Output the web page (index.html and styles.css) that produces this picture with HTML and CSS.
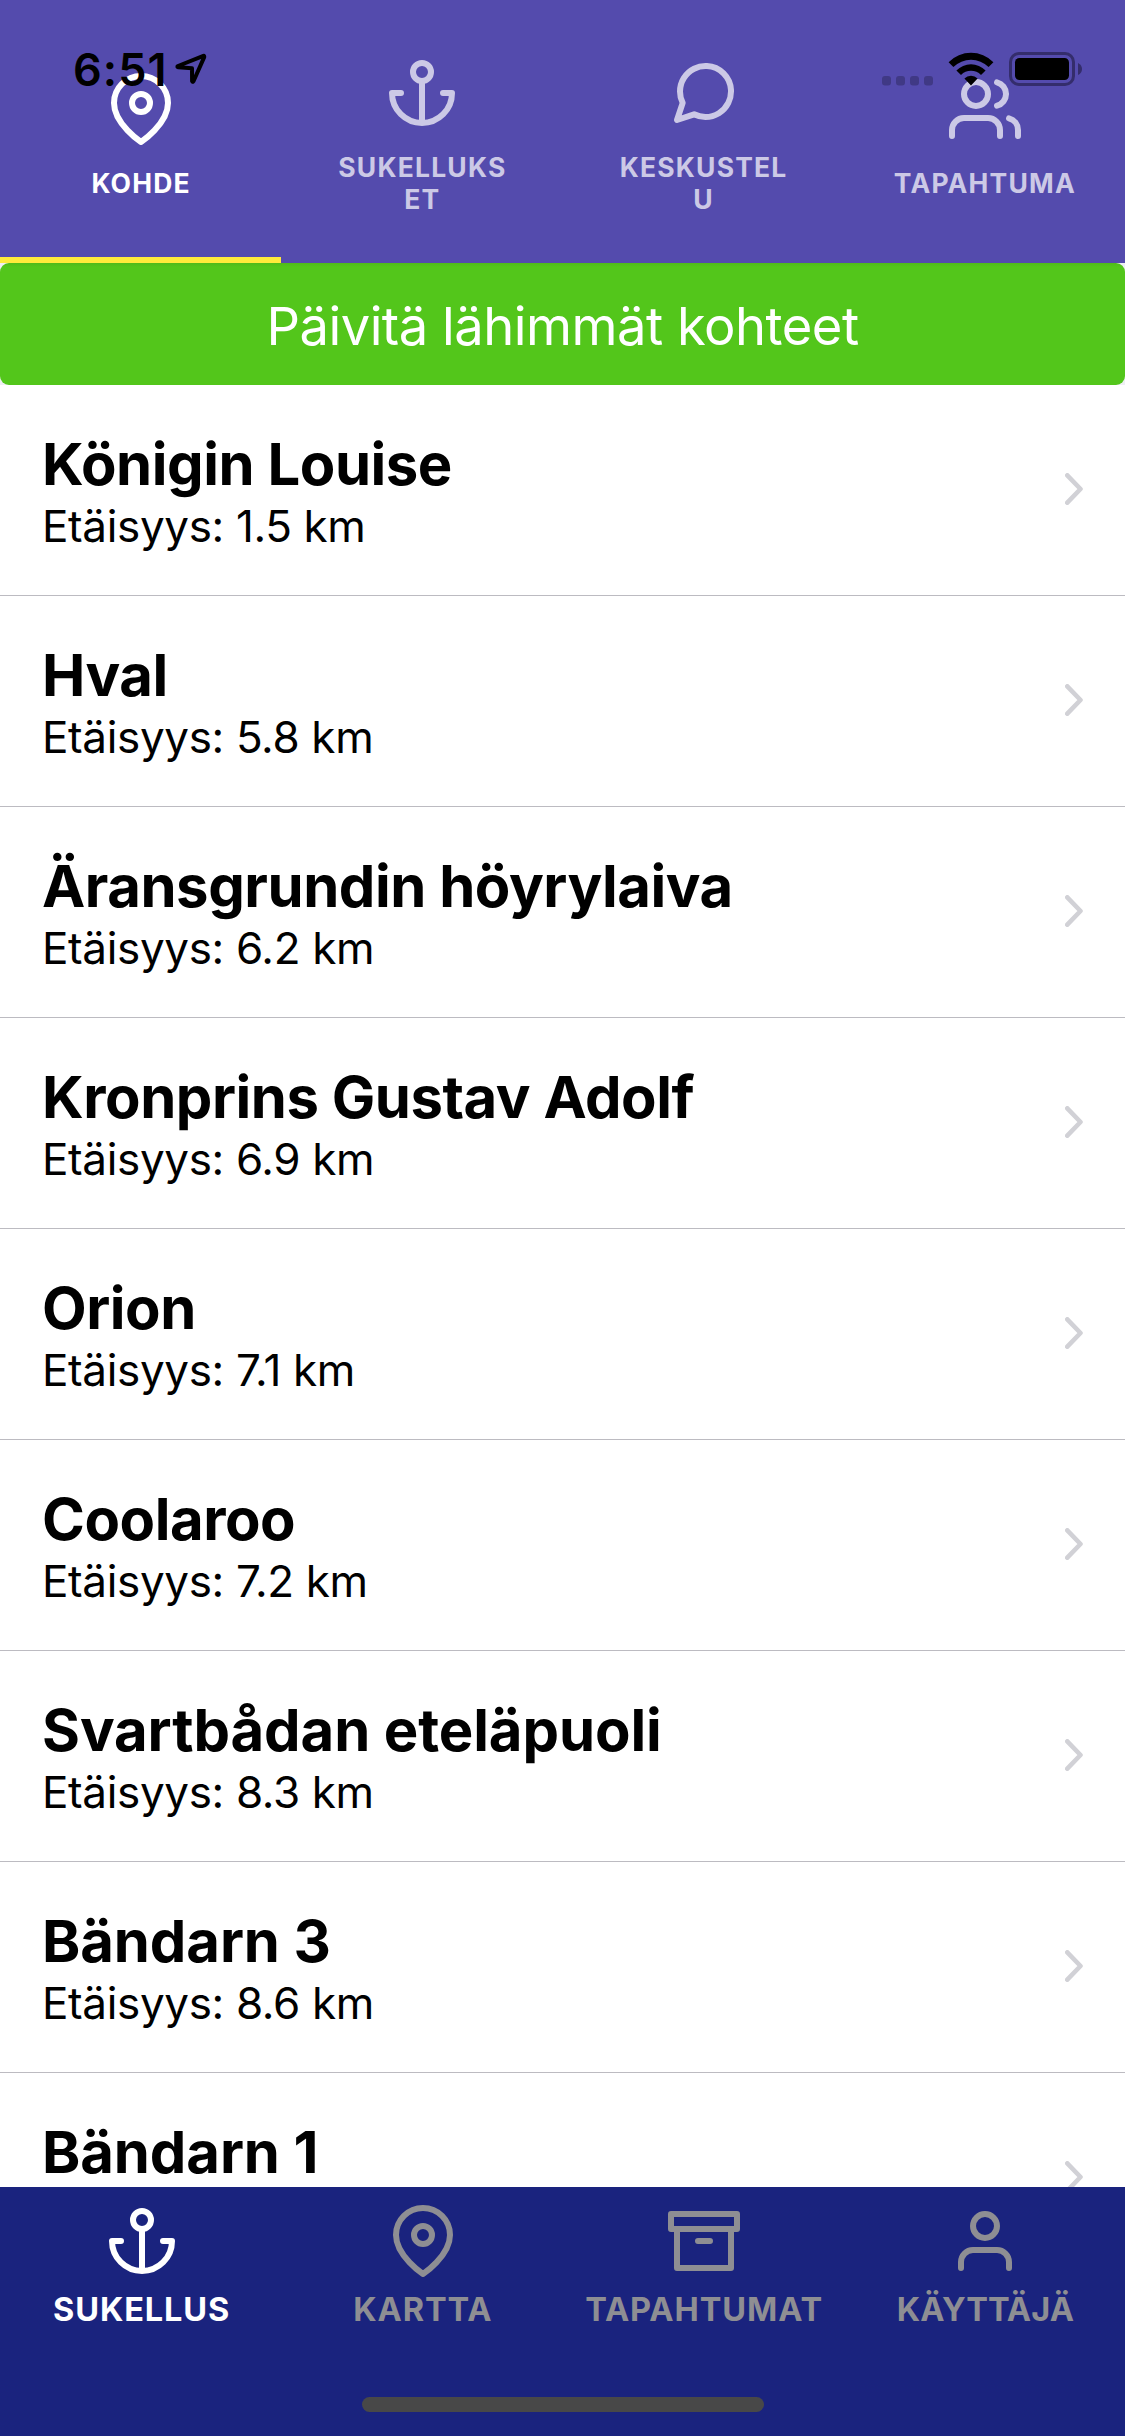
FILE: index.html
```html
<!DOCTYPE html>
<html lang="fi">
<head>
<meta charset="utf-8">
<title>Sukelluskohteet</title>
<link rel="stylesheet" href="styles.css">
</head>
<body>
<svg class="defs" aria-hidden="true">
  <symbol id="pin" viewBox="0 0 24 24"><path d="M21 10c0 7-9 13-9 13s-9-6-9-13a9 9 0 0 1 18 0z"/><circle cx="12" cy="10" r="3"/></symbol>
  <symbol id="anchor" viewBox="0 0 24 24"><circle cx="12" cy="5" r="3"/><path d="M12 22V8M5 12H2a10 10 0 0 0 20 0h-3"/></symbol>
  <symbol id="message" viewBox="0 0 24 24"><path d="M21 11.5a8.38 8.38 0 0 1-.9 3.8 8.5 8.5 0 0 1-7.6 4.7 8.38 8.38 0 0 1-3.8-.9L3 21l1.9-5.7a8.38 8.38 0 0 1-.9-3.8 8.5 8.5 0 0 1 4.7-7.6 8.38 8.38 0 0 1 3.8-.9h.5a8.48 8.48 0 0 1 8 8v.5z"/></symbol>
  <symbol id="users" viewBox="0 0 24 24"><path d="M17 21v-2a4 4 0 0 0-4-4H5a4 4 0 0 0-4 4v2"/><circle cx="9" cy="7" r="4"/><path d="M23 21v-2a4 4 0 0 0-3-3.87M16 3.13a4 4 0 0 1 0 7.75"/></symbol>
  <symbol id="archive" viewBox="0 0 24 24"><path d="M21 8v13H3V8M1 3h22v5H1zM10 12h4"/></symbol>
  <symbol id="user" viewBox="0 0 24 24"><path d="M20 21v-2a4 4 0 0 0-4-4H8a4 4 0 0 0-4 4v2"/><circle cx="12" cy="7" r="4"/></symbol>
  <symbol id="chevron" viewBox="0 0 18 32"><path d="M2.3 2.3 15.5 16 2.3 29.7"/></symbol>
</svg>
<div class="screen">
  <header class="tabs">
    <div class="tab tab-active"><svg class="icon"><use href="#pin"/></svg><span>KOHDE</span></div>
    <div class="tab"><svg class="icon"><use href="#anchor"/></svg><span>SUKELLUKS<br>ET</span></div>
    <div class="tab"><svg class="icon"><use href="#message"/></svg><span>KESKUSTEL<br>U</span></div>
    <div class="tab"><svg class="icon"><use href="#users"/></svg><span>TAPAHTUMA</span></div>
  </header>

  <main class="content">
    <div class="refresh-wrap"><button class="refresh">Päivitä lähimmät kohteet</button></div>
    <ul class="list">
      <li class="row"><div><h2>Königin Louise</h2><p>Etäisyys: 1.5 km</p></div><svg class="chevron"><use href="#chevron"/></svg></li>
      <li class="row"><div><h2>Hval</h2><p>Etäisyys: 5.8 km</p></div><svg class="chevron"><use href="#chevron"/></svg></li>
      <li class="row"><div><h2>Äransgrundin höyrylaiva</h2><p>Etäisyys: 6.2 km</p></div><svg class="chevron"><use href="#chevron"/></svg></li>
      <li class="row"><div><h2>Kronprins Gustav Adolf</h2><p>Etäisyys: 6.9 km</p></div><svg class="chevron"><use href="#chevron"/></svg></li>
      <li class="row"><div><h2>Orion</h2><p>Etäisyys: 7.1 km</p></div><svg class="chevron"><use href="#chevron"/></svg></li>
      <li class="row"><div><h2>Coolaroo</h2><p>Etäisyys: 7.2 km</p></div><svg class="chevron"><use href="#chevron"/></svg></li>
      <li class="row"><div><h2 class="wide">Svartbådan eteläpuoli</h2><p>Etäisyys: 8.3 km</p></div><svg class="chevron"><use href="#chevron"/></svg></li>
      <li class="row"><div><h2 class="wide">Bändarn 3</h2><p>Etäisyys: 8.6 km</p></div><svg class="chevron"><use href="#chevron"/></svg></li>
      <li class="row"><div><h2 class="wide">Bändarn 1</h2></div><svg class="chevron"><use href="#chevron"/></svg></li>
    </ul>
  </main>

  <nav class="bottom">
    <div class="nav-item nav-active"><svg class="icon"><use href="#anchor"/></svg><span>SUKELLUS</span></div>
    <div class="nav-item"><svg class="icon"><use href="#pin"/></svg><span>KARTTA</span></div>
    <div class="nav-item"><svg class="icon"><use href="#archive"/></svg><span>TAPAHTUMAT</span></div>
    <div class="nav-item"><svg class="icon"><use href="#user"/></svg><span class="tight">KÄYTTÄJÄ</span></div>
    <div class="home-indicator"></div>
  </nav>

  <div class="status">
    <span class="time">6:51</span>
    <svg class="location" viewBox="0 0 32 34"><path d="M28.4 3.9 3 14q-1.4.9.3 1.3L17 16.2l.1 12.9q.5 1.5 1.4.1L29.2 5.1q.3-1.5-.8-1.2z"/></svg>
    <svg class="signal" viewBox="0 0 51 10"><rect width="9" height="9.5" rx="3"/><rect x="14" width="9" height="9.5" rx="3"/><rect x="28" width="9" height="9.5" rx="3"/><rect x="42" width="9" height="9.5" rx="3"/></svg>
    <svg class="wifi" viewBox="0 0 46 34">
      <path d="M.6 10.2a31.5 31.5 0 0 1 44.8 0L40.6 15a25 25 0 0 0-35.2 0zM8.4 18.4a20.5 20.5 0 0 1 29.2 0L33 23a14 14 0 0 0-20 0zM16.4 26.5a9.5 9.5 0 0 1 13.2 0L23 33.4z"/>
    </svg>
    <svg class="battery" viewBox="0 0 74 34"><rect class="shell" x="1.5" y="1.5" width="63" height="31" rx="8.5"/><rect x="6" y="6" width="54" height="22" rx="4.5"/><path class="cap" d="M69 11q4 2 4 6t-4 6z"/></svg>
  </div>
</div>
</body>
</html>
```
FILE: styles.css
```css
* {
  box-sizing: border-box;
  margin: 0;
  padding: 0;
}

body {
  font-family: Inter, "Liberation Sans", sans-serif;
  background: #fff;
}

.defs {
  display: none;
}

.screen {
  position: relative;
  display: flex;
  flex-direction: column;
  width: 1125px;
  height: 2436px;
  overflow: hidden;
}

.icon {
  display: block;
  width: 72px;
  height: 72px;
  fill: none;
  stroke: currentColor;
  stroke-width: 2;
  stroke-linecap: round;
  stroke-linejoin: round;
  overflow: visible;
}

.tabs {
  display: grid;
  grid-template-columns: repeat(4, 1fr);
  flex: none;
  height: 263px;
  background: #544bad;
}

.tab {
  display: flex;
  flex-direction: column;
  align-items: center;
  justify-content: center;
  gap: 22px;
  padding: 8px 0 0 1px;
  color: #ccc9e6;
  font-size: 26.5px;
  font-weight: 650;
  line-height: 32px;
  letter-spacing: 1.2px;
  text-align: center;
}

.tab-active {
  color: #fff;
  box-shadow: inset 0 -6px #ffeb3b;
}

.content {
  flex: 1;
  min-height: 0;
  overflow: hidden;
}

.refresh-wrap {
  height: 122px;
  background: #efeff4;
}

.refresh {
  display: block;
  width: 100%;
  height: 122px;
  padding-top: 3px;
  border: 0;
  border-radius: 9px;
  background: linear-gradient(#4fba1a, #53c61b 4px);
  color: #fff;
  font: 370 52.5px/64px Inter, "Liberation Sans", sans-serif;
  letter-spacing: -0.5px;
}

.list {
  list-style: none;
}

.row {
  display: flex;
  justify-content: space-between;
  height: 211px;
  padding: 44px 42px 0;
  border-bottom: 1px solid #bcbbc1;
}

.row h2 {
  font-size: 58px;
  font-weight: 700;
  line-height: 70px;
  letter-spacing: -0.45px;
}

.row .wide {
  letter-spacing: -0.1px;
}

.row p {
  font-size: 44px;
  line-height: 54px;
  letter-spacing: -0.35px;
}

.chevron {
  width: 18px;
  height: 32px;
  margin-top: 44px;
  fill: none;
  stroke: #d1d1d6;
  stroke-width: 4.6;
  stroke-linecap: round;
  stroke-linejoin: round;
}

.bottom {
  display: grid;
  grid-template-columns: repeat(4, 1fr);
  grid-template-rows: 192px 15px;
  flex: none;
  height: 249px;
  padding-top: 18px;
  background: #1a237e;
}

.nav-item {
  display: flex;
  flex-direction: column;
  align-items: center;
  gap: 13px;
  padding-left: 2px;
  color: #8e8e93;
  font-size: 32.5px;
  font-weight: 650;
  line-height: 40px;
  letter-spacing: 0.9px;
}

.nav-active {
  color: #fff;
}

.tight {
  letter-spacing: 0.1px;
}

.home-indicator {
  grid-column: 1 / -1;
  justify-self: center;
  width: 402px;
  height: 15px;
  border-radius: 8px;
  background: #484848;
}

/* The system status bar floats above the app header. */
.status {
  position: absolute;
  top: 52px;
  left: 73px;
  right: 42px;
  height: 34px;
  display: flex;
  align-items: flex-start;
}

.time {
  width: 102px;
  font-size: 45px;
  font-weight: 570;
  line-height: 35px;
  letter-spacing: 1px;
}

.location {
  width: 32px;
  height: 34px;
  fill: none;
  stroke: #000;
  stroke-width: 4;
  stroke-linejoin: round;
}

.signal {
  width: 51px;
  height: 10px;
  margin: 24px 15px 0 auto;
  fill: #403985;
}

.wifi {
  width: 46px;
  height: 34px;
  margin-right: 15px;
}

.battery {
  width: 74px;
  height: 34px;
}

.shell {
  fill: none;
  stroke: #342d6c;
  stroke-width: 3;
}

.cap {
  fill: #342d6c;
}
```
